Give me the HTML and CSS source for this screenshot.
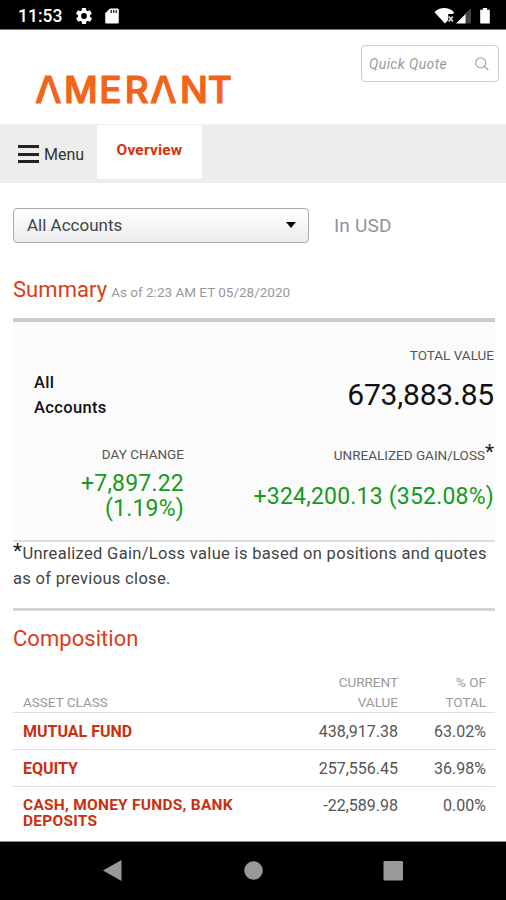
FILE: index.html
```html
<!DOCTYPE html>
<html lang="en">
<head>
<meta charset="utf-8">
<title>Amerant – Overview</title>
<link rel="stylesheet" href="styles.css">
</head>
<body>
<div class="status">
  <span class="clock">11:53</span>
  <svg class="gear" viewBox="2 2 20 20" width="16" height="16"><path fill="#fff" fill-rule="evenodd" d="M19.4 13c0-.3.1-.6.1-1s0-.7-.1-1l2.1-1.700c.2-.1.2-.4.1-.6l-2-3.500c-.1-.2-.4-.3-.6-.2l-2.500 1c-.5-.4-1.100-.7-1.700-1l-.4-2.600c0-.2-.2-.4-.5-.4h-4c-.2 0-.4.200-.5.4l-.4 2.600c-.6.300-1.200.6-1.700 1l-2.500-1c-.2-.1-.5 0-.6.2l-2 3.500c-.1.200-.1.500.1.600L4.600 11c0 .3-.1.6-.1 1s0 .7.1 1l-2.100 1.700c-.2.1-.2.400-.1.600l2 3.500c.1.200.4.300.6.200l2.500-1c.5.400 1.100.7 1.700 1l.4 2.600c0 .2.2.400.5.400h4c.2 0 .5-.2.5-.4l.4-2.600c.6-.3 1.200-.6 1.700-1l2.500 1c.2.100.5 0 .6-.2l2-3.500c.1-.2.100-.5-.1-.6zM12 15.600a3.600 3.600 0 1 1 0-7.200 3.600 3.600 0 0 1 0 7.200z"/></svg>
  <svg class="sd" viewBox="0 0 14 16" width="14" height="16"><path fill="#fff" d="M5 .5h7.500a1.300 1.300 0 0 1 1.300 1.300v12.400a1.300 1.300 0 0 1-1.300 1.300h-11A1.300 1.300 0 0 1 .2 14.200V5.300z"/><path stroke="#222" stroke-width="1.300" d="M6.200 2v3M8.700 2v3M11.200 2v3"/></svg>
  <svg class="signals" viewBox="0 0 58 18" width="58" height="18"><path fill="#fff" d="M.5 5.200C5.500-.3 15-.3 20 5.200l-.8 1.900h-5V13l-3.200 3.600z"/><path stroke="#ddd" stroke-width="1.700" d="M14.700 9.500l4.200 5M18.900 9.500l-4.200 5"/><path fill="#444" d="M31 6.500l6-5v15h-6z"/><path fill="#fff" d="M22 16.500L31.500 7v9.500zM46.200 2.800h2.700V1h4.200v1.800h2.700v13.700h-9.600z"/></svg>
</div>
<header class="header">
  <svg class="logo" viewBox="0 0 215 56" width="215" height="56" role="img" aria-label="Amerant">
    <text class="wordmark" y="38" x="2.300 31 66.300 91.800 117.300 147 174.800">AMERANT</text>
    <path fill="#fff" d="M15.500 17L23.300 39.500H7.700zM130.500 17L138.300 39.500H122.700z"/>
  </svg>
  <div class="quote"><span>Quick Quote</span>
    <svg viewBox="0 0 16 16" width="16" height="16"><circle cx="6.800" cy="6.800" r="5" fill="none" stroke="#aaa" stroke-width="1.300"/><path d="M10.500 10.500l3.800 3.500" stroke="#aaa" stroke-width="1.500"/></svg>
  </div>
</header>
<nav class="nav">
  <div class="menu"><i class="bars"></i><span>Menu</span></div>
  <div class="tab">Overview</div>
</nav>
<main class="main">
  <div class="filter">
    <div class="select"><span>All Accounts</span><i class="caret"></i></div>
    <span class="currency">In USD</span>
  </div>
  <div class="heading"><h2 class="summary-title">Summary</h2><span class="asof">As of 2:23 AM ET 05/28/2020</span></div>
  <section class="summary">
    <div class="row top">
      <div class="account">All<br>Accounts</div>
      <div class="metric"><div class="label">TOTAL VALUE</div><div class="big">673,883.85</div></div>
    </div>
    <div class="row">
      <div class="metric day"><div class="label">DAY CHANGE</div><div class="gain">+7,897.22<br>(1.19%)</div></div>
      <div class="metric unreal"><div class="label">UNREALIZED GAIN/LOSS<span class="star">*</span></div><div class="gain wide">+324,200.13 (352.08%)</div></div>
    </div>
  </section>
  <p class="note"><span class="star">*</span>Unrealized Gain/Loss value is based on positions and quotes<br>as of previous close.</p>
  <section class="composition">
    <h2 class="comp-title">Composition</h2>
    <div class="trow thead"><span>ASSET CLASS</span><span>CURRENT<br>VALUE</span><span>% OF<br>TOTAL</span></div>
    <div class="trow"><b>MUTUAL FUND</b><span>438,917.38</span><span>63.02%</span></div>
    <div class="trow"><b>EQUITY</b><span>257,556.45</span><span>36.98%</span></div>
    <div class="trow last"><b class="cash">CASH, MONEY FUNDS, BANK<br>DEPOSITS</b><span>-22,589.98</span><span>0.00%</span></div>
  </section>
</main>
<footer class="navbar">
  <svg viewBox="0 0 506 57" width="506" height="57"><path fill="#999" d="M103 28.500L121.500 18v21z"/><circle cx="253.500" cy="28.500" r="9.300" fill="#999"/><rect x="383.500" y="19" width="19.500" height="19.500" rx="1" fill="#999"/></svg>
</footer>
</body>
</html>
```
FILE: styles.css
```css
* { box-sizing: border-box; }
body { margin: 0; width: 506px; height: 900px; overflow: hidden; display: flex; flex-direction: column; background: #fff; font-family: Roboto, "Liberation Sans", sans-serif; color: #444; }
h2, p { margin: 0; font-weight: 400; }

.status { height: 30px; flex: none; background: #000; border-bottom: 1px solid #777; display: flex; align-items: center; padding: 2px 14px 0 18px; }
.clock { color: #fff; font-size: 17.500px; font-weight: 500; width: 44px; white-space: nowrap; }
.gear { margin-left: 14px; }
.sd { margin-left: 13px; }
.signals { margin-left: auto; }

.header { height: 95px; flex: none; display: flex; justify-content: space-between; align-items: flex-start; padding: 15px 7px 0 33px; border-bottom: 1px solid #f1f1f1; }
.logo { margin-top: 20px; }
.wordmark { font: 500 37px Inter, sans-serif; fill: #f26419; stroke: #f26419; stroke-width: 1.200; stroke-linejoin: round; }
.quote { width: 138px; height: 37px; border: 1.500px solid #ccc; border-radius: 4px; display: flex; align-items: center; justify-content: space-between; padding: 0 8px 0 7px; color: #999; font-size: 14px; font-style: italic; letter-spacing: .4px; }

.nav { height: 58px; flex: none; background: #ededed; display: flex; }
.menu { width: 97px; padding-left: 18px; display: flex; align-items: center; gap: 5px; font-size: 16px; color: #333; }
.bars { width: 21px; height: 18px; border-top: 3px solid #222; border-bottom: 3px solid #222; display: flex; align-items: center; }
.bars::before { content: ""; width: 100%; height: 3px; background: #222; }
.tab { width: 105px; height: 54px; background: #fff; color: #d8320c; font-weight: 700; font-size: 15.500px; line-height: 51px; text-align: center; letter-spacing: .2px; }

.main { flex: 1; padding: 25px 11px 0 13px; }
.filter { display: flex; align-items: center; gap: 25px; height: 35px; }
.select { width: 296px; height: 35px; border: 1.500px solid #aaa; border-radius: 4px; background: linear-gradient(#fff, #ececec); display: flex; align-items: center; justify-content: space-between; padding: 0 12px 1px 13px; font-size: 17px; }
.caret { border: 5.500px solid transparent; border-top: 6px solid #000; border-bottom: 0; }
.currency { font-size: 19px; letter-spacing: .2px; color: #8b93a3; }

.heading { display: flex; align-items: baseline; gap: 4px; height: 75px; padding-top: 33px; }
.summary-title, .comp-title { color: #dc3b16; font-size: 22px; line-height: 27px; letter-spacing: .05px; }
.asof { font-size: 13.500px; color: #999; }
.summary { width: 482px; height: 224px; border-top: 4px solid #ccc; border-bottom: 2px solid #ddd; background: #fbfbfb; padding: 25px 1px 0 0; }
.row { display: flex; justify-content: space-between; }
.top { height: 95px; }
.account { padding: 24px 0 0 21px; font-size: 16.500px; font-weight: 500; line-height: 24.500px; color: #111; letter-spacing: .35px; }
.metric { text-align: right; white-space: nowrap; }
.label { font-size: 13.500px; line-height: 16px; color: #555; }
.big { font-size: 30px; line-height: 36px; color: #111; margin-top: 14px; letter-spacing: -.2px; }
.day { width: 171px; padding-top: 4px; }
.gain { color: #149b1b; font-size: 23px; line-height: 25px; margin-top: 9px; letter-spacing: .2px; }
.unreal { padding-top: 5px; }
.wide { margin-top: 21px; }
.star { font-size: 21px; line-height: 0; position: relative; top: -1px; color: #222; }
.note { font-size: 16.500px; line-height: 24.500px; height: 69px; width: 482px; border-bottom: 3px solid #d4d4d4; letter-spacing: .32px; white-space: nowrap; }

.composition { width: 482px; }
.comp-title { padding-top: 14px; height: 62px; }
.trow { display: grid; grid-template-columns: 1fr 120px 88px; padding: 9px 9px 0 10px; height: 37px; border-bottom: 1.500px solid #ddd; font-size: 16px; line-height: 19px; color: #555; }
.trow span:not(:first-child) { text-align: right; }
.thead { height: 40px; padding-top: 0; font-size: 13.500px; line-height: 19.500px; color: #999; align-items: end; }
.trow b { color: #c9300f; font-weight: 700; }
.last { border: 0; }
.trow .cash { line-height: 16px; padding-top: 1px; font-size: 15.500px; letter-spacing: .25px; white-space: nowrap; }

.navbar { height: 59px; flex: none; background: #000; border-top: 1px solid #888; }
.navbar svg { display: block; }
```
